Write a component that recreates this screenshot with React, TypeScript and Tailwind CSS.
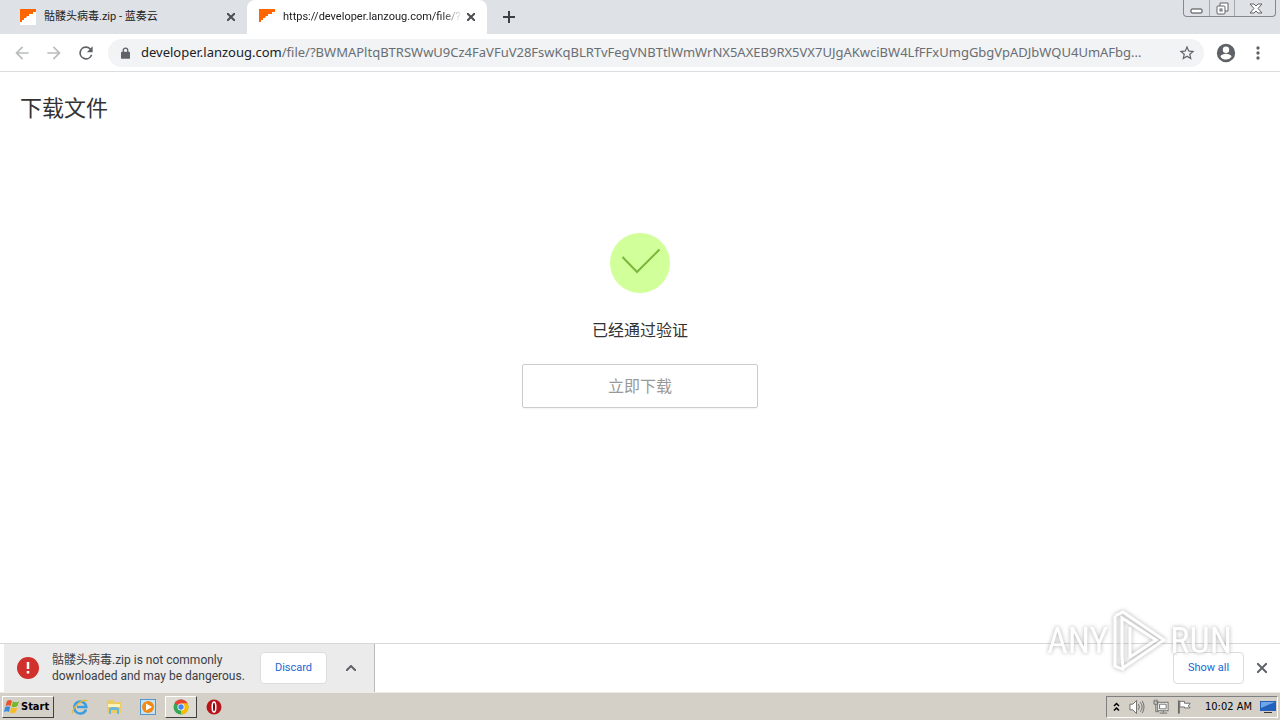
import type { ReactNode } from 'react';

const PATH =
  '/file/?BWMAPltqBTRSWwU9Cz4FaVFuV28FswKqBLRTvFegVNBTtlWmWrNX5AXEB9RX5VX7UJgAKwciBW4LfFFxUmgGbgVpADJbWQU4UmAFbg...';

export default function App() {
  return (
    <div className="flex min-h-screen flex-col bg-white font-['Noto_Sans','Noto_Sans_CJK_SC',sans-serif] text-[#202124]">
      <TabStrip />
      <Toolbar />
      <DownloadPage />
      <DownloadShelf />
      <Taskbar />
    </div>
  );
}

/* ── Tabs ─────────────────────────────────────────── */

function TabStrip() {
  return (
    <header className="flex h-[34px] items-stretch bg-[#dee1e6]">
      <Tab title="骷髅头病毒.zip - 蓝奏云" />
      <Tab title="https://developer.lanzoug.com/file/?" active />
      <button type="button" aria-label="New tab" className="ml-3 flex w-5 items-center justify-center text-[#3c4043]">
        <svg width="12" height="12" viewBox="0 0 12 12" stroke="currentColor" strokeWidth="2">
          <path d="M6 0v12M0 6h12" />
        </svg>
      </button>
      <div className="mr-1 ml-auto flex h-[17px] rounded-b border border-t-0 border-[#85888f] text-[#5f6368]">
        <WindowButton label="Minimize" width="w-[25px]">
          <rect x="3" y="8" width="11" height="4" rx="1" fill="#fff" stroke="#3c4043" />
        </WindowButton>
        <WindowButton label="Restore" width="w-[25px]">
          <path d="M6 5V2h8v8h-3" fill="#fff" />
          <rect x="3" y="5" width="8" height="8" rx="1" fill="#fff" />
          <rect x="6" y="8" width="2" height="2" />
        </WindowButton>
        <WindowButton label="Close" width="w-[41px]">
          <path d="M3 3h4l2 2 2-2h4l-4 4.500 4 4.500h-4l-2-2-2 2H3l4-4.500z" fill="#fff" />
        </WindowButton>
      </div>
    </header>
  );
}

function Tab({ title, active = false }: { title: string; active?: boolean }) {
  return (
    <div
      className={`flex items-center pr-2 ${
        active ? 'w-60 rounded-t-lg bg-white pl-3' : 'w-[247px] pl-5'
      }`}
    >
      <svg width="16" height="16" viewBox="0 0 16 16" className="shrink-0">
        <rect width="16" height="16" fill="#fff" />
        <path d="M0 0h16v3h-3v2h-4v2H7l-1 2H4v2H2v2H0z" fill="#ff6600" />
      </svg>
      <span
        className={`ml-2 min-w-0 flex-1 overflow-hidden pt-px font-[Roboto,'Noto_Sans_CJK_SC',sans-serif] text-[11px] whitespace-nowrap ${
          active ? '[mask-image:linear-gradient(to_right,#000_88%,transparent)]' : ''
        }`}
      >
        {title}
      </span>
      <button type="button" aria-label="Close tab" className="flex size-4 shrink-0 items-center justify-center text-[#4a4d51]">
        <svg width="8" height="8" viewBox="0 0 8 8" stroke="currentColor" strokeWidth="2">
          <path d="M0 0l8 8M8 0L0 8" />
        </svg>
      </button>
    </div>
  );
}

function WindowButton({ label, width, children }: { label: string; width: string; children: ReactNode }) {
  return (
    <button
      type="button"
      aria-label={label}
      className={`flex items-center justify-center border-l border-[#a4a7ad] first:border-l-0 ${width}`}
    >
      <svg width="17" height="15" viewBox="0 0 17 15" fill="none" stroke="currentColor">
        {children}
      </svg>
    </button>
  );
}

/* ── Address bar ──────────────────────────────────── */

function Toolbar() {
  return (
    <nav className="flex h-[38px] items-center border-b border-[#dadce0] px-3">
      <button type="button" aria-label="Back" className="mr-3 text-[#babcbe]">
        <MaterialIcon d="M20 11H7.830l5.590-5.590L12 4l-8 8 8 8 1.410-1.410L7.830 13H20z" />
      </button>
      <button type="button" aria-label="Forward" className="mr-3 text-[#babcbe]">
        <MaterialIcon d="M12 4l-1.410 1.410L16.170 11H4v2h12.170l-5.580 5.590L12 20l8-8z" />
      </button>
      <button type="button" aria-label="Reload" className="mr-3 text-[#5f6368]">
        <MaterialIcon d="M17.650 6.350A8 8 0 1 0 19.730 14h-2.080A6 6 0 1 1 12 6c1.660 0 3.140.690 4.220 1.780L13 11h7V4z" />
      </button>
      <div className="flex h-7 min-w-0 flex-1 items-center rounded-full bg-[#f1f3f4] pr-2 pl-[13px]">
        <svg width="9" height="12" viewBox="0 0 10 13" className="shrink-0 text-[#5f6368]">
          <path d="M2.500 6V3.500a2.500 2.500 0 0 1 5 0V6" fill="none" stroke="currentColor" strokeWidth="1.500" />
          <rect y="5" width="10" height="8" rx="1" fill="currentColor" />
        </svg>
        <a href="#" className="ml-[11px] min-w-0 flex-1 overflow-hidden text-[13px] whitespace-nowrap text-[#6a6e73]">
          <span className="text-[#202124]">developer.lanzoug.com</span>
          {PATH}
        </a>
        <button type="button" aria-label="Bookmark this page" className="ml-2 text-[#5f6368]">
          <MaterialIcon
            size={18}
            d="M22 9.240l-7.190-.620L12 2 9.190 8.630 2 9.240l5.460 4.730L5.820 21 12 17.270 18.180 21l-1.630-7.030zM12 15.400l-3.760 2.270 1-4.280-3.320-2.880 4.380-.380L12 6.100l1.710 4.040 4.380.380-3.320 2.880 1 4.280z"
          />
        </button>
      </div>
      <button type="button" aria-label="Profile" className="ml-[11px] text-[#5f6368]">
        <MaterialIcon
          size={22}
          d="M12 2a10 10 0 1 0 0 20 10 10 0 0 0 0-20zm0 3a3.500 3.500 0 1 1 0 7 3.500 3.500 0 0 1 0-7zm0 14.200a7.200 7.200 0 0 1-6-3.220c.030-1.990 4-3.080 6-3.080s5.970 1.090 6 3.080a7.200 7.200 0 0 1-6 3.220z"
        />
      </button>
      <button type="button" aria-label="Menu" className="ml-[11px] text-[#5f6368]">
        <MaterialIcon d="M12 8a2 2 0 1 0 0-4 2 2 0 0 0 0 4zm0 2a2 2 0 1 0 0 4 2 2 0 0 0 0-4zm0 6a2 2 0 1 0 0 4 2 2 0 0 0 0-4z" />
      </button>
    </nav>
  );
}

function MaterialIcon({ d, size = 20 }: { d: string; size?: number }) {
  return (
    <svg width={size} height={size} viewBox="0 0 24 24" fill="currentColor" className="block">
      <path d={d} />
    </svg>
  );
}

/* ── Page ─────────────────────────────────────────── */

function DownloadPage() {
  return (
    <main className="flex-1 font-['Noto_Sans_CJK_SC',sans-serif] text-[#333]">
      <h1 className="px-5 pt-[18px] text-[22px] leading-8">下载文件</h1>
      <div className="mt-[111px] flex flex-col items-center">
        <svg width="60" height="60" viewBox="0 0 60 60">
          <circle cx="30" cy="30" r="30" fill="#d1ff99" />
          <path d="M12.500 24L27 39l22.500-22.500" fill="none" stroke="#7db63c" strokeWidth="2" />
        </svg>
        <p className="mt-6 text-base leading-6">已经通过验证</p>
        <button
          type="button"
          className="mt-[23px] h-11 w-[236px] rounded-xs border border-[#ccc] pb-[2px] text-base text-[#999] shadow-xs"
        >
          立即下载
        </button>
      </div>
    </main>
  );
}

/* ── Download shelf ───────────────────────────────── */

function DownloadShelf() {
  return (
    <section className="relative flex h-[49px] items-stretch border-t border-[#d5d7da] bg-white pl-1">
      <div className="flex items-center border-r border-[#bbb] bg-[#ebebeb] pr-[11px] pl-3">
        <svg width="24" height="24" viewBox="0 0 24 24" className="shrink-0">
          <circle cx="12" cy="12" r="11" fill="#d0312d" />
          <path d="M12 6v7M12 15v2.500" stroke="#fff" strokeWidth="2.500" />
        </svg>
        <p className="mr-[6px] ml-3 w-[202px] font-[Roboto,'Noto_Sans_CJK_SC',sans-serif] text-xs leading-4 whitespace-nowrap text-[#3c4043]">
          骷髅头病毒.zip is not commonly
          <br />
          downloaded and may be dangerous.
        </p>
        <ShelfButton width="w-[67px]">Discard</ShelfButton>
        <button type="button" aria-label="More options" className="ml-3 flex size-6 items-center justify-center text-[#5f6368]">
          <svg width="10" height="6" viewBox="0 0 10 6" fill="none" stroke="currentColor" strokeWidth="2">
            <path d="M0 6l5-5 5 5" />
          </svg>
        </button>
      </div>
      <div className="ml-auto flex items-center pr-3">
        <ShelfButton width="w-[71px]">Show all</ShelfButton>
        <button type="button" aria-label="Close downloads" className="ml-3 flex size-3 items-center justify-center text-[#5f6368]">
          <svg width="10" height="10" viewBox="0 0 10 10" stroke="currentColor" strokeWidth="2">
            <path d="M0 0l10 10M10 0L0 10" />
          </svg>
        </button>
      </div>
      <Watermark />
    </section>
  );
}

function ShelfButton({ width, children }: { width: string; children: ReactNode }) {
  return (
    <button
      type="button"
      className={`h-8 rounded border border-[#dadce0] bg-white font-[Roboto,sans-serif] text-[11px] leading-3 text-[#1967d2] ${width}`}
    >
      {children}
    </button>
  );
}

// Floats over the page and the shelf, so it must not take clicks.
function Watermark() {
  return (
    <div className="pointer-events-none absolute right-12 bottom-5 flex items-center font-['Roboto_Condensed',Roboto,sans-serif] text-4xl leading-9 text-white opacity-80 drop-shadow-[0_0_2px_#999]">
      <span>ANY</span>
      <svg width="62" height="62" viewBox="0 0 62 62" fill="none" stroke="currentColor" strokeWidth="3">
        <path d="M7 6v50l9 4M7 6l8-4 41 28-41 28-1-12V8l34 22-26 17V17" />
      </svg>
      <span>RUN</span>
    </div>
  );
}

/* ── Taskbar ──────────────────────────────────────── */

function Taskbar() {
  return (
    <footer className="flex h-7 items-center border-t border-[#eceae6] bg-[#d4d0c8] font-['DejaVu_Sans_Condensed','DejaVu_Sans',sans-serif] text-[11px] text-black">
      <button
        type="button"
        className="ml-[2px] flex h-[22px] w-[52px] items-center gap-px border border-t-white border-r-[#404040] border-b-[#404040] border-l-white pt-px pl-px font-bold"
      >
        <svg width="16" height="16" viewBox="0 0 16 16">
          <path d="M3 2q3-2 5 0L6.500 7q-2-1.500-5 0z" fill="#e8532a" />
          <path d="M9 2.500q3 1.500 6 0L13.500 7q-3 2-6 .5z" fill="#76b82a" />
          <path d="M1.200 8q3-1.500 5 0L5 13q-2-1.500-5 0z" fill="#3a8ddc" />
          <path d="M7.200 8.500q3 1.500 6 0L12 13q-3 2-6 .5z" fill="#f7bd1e" />
        </svg>
        Start
      </button>
      <div className="ml-[9px] flex items-center">
        <TaskItem label="Internet Explorer">
          <path d="M14 10.500A6 6 0 1 1 14.300 8H5" fill="none" stroke="#3a9fe0" strokeWidth="2.500" />
          <path d="M1 14.500C-1 10 10-1 15.500 2" fill="none" stroke="#efb92e" strokeWidth="1.200" />
        </TaskItem>
        <TaskItem label="Windows Explorer">
          <path d="M1 3l2-2h4l1 2h7v11H1z" fill="#edcb63" />
          <path d="M2 5h12v3H2z" fill="#fff3b8" />
          <path d="M3 15V9q5-2 10 0v6h-2v-4H5v4z" fill="#69b6df" />
        </TaskItem>
        <TaskItem label="Media Player">
          <rect x=".5" y=".5" width="15" height="15" fill="#c5e3f7" stroke="#5497d0" />
          <circle cx="8" cy="8" r="6" fill="#f28a13" />
          <path d="M6 4.500v7l6-3.500z" fill="#fff" />
        </TaskItem>
        <TaskItem label="Chrome" active>
          <circle cx="8" cy="8" r="7.500" fill="#34a853" />
          <path d="M1.500 4.250A7.500 7.500 0 0 1 14.500 4.250L8 8z" fill="#ea4335" />
          <path d="M14.500 4.250A7.500 7.500 0 0 1 8 15.500V8l1-3.750z" fill="#fbbc05" />
          <circle cx="8" cy="8" r="3.500" fill="#fff" />
          <circle cx="8" cy="8" r="2.700" fill="#4285f4" />
        </TaskItem>
        <TaskItem label="Opera">
          <circle cx="8" cy="8" r="7.500" fill="#b8141c" />
          <ellipse cx="8" cy="8" rx="1.800" ry="5" fill="#80080e" stroke="#fff" strokeWidth="1.500" />
        </TaskItem>
      </div>
      <div className="mr-[2px] ml-auto flex h-[22px] items-center border border-t-[#808080] border-r-white border-b-white border-l-[#808080] pl-[6px]">
        <svg width="7" height="10" viewBox="0 0 7 10" fill="none" stroke="#000" strokeWidth="1.500" className="mr-px">
          <path d="M1 4l2.500-2.500L6 4M1 8.500L3.500 6 6 8.500" />
        </svg>
        <TrayIcon>
          <path d="M1 5h3l4-4v14l-4-4H1z" fill="#fff" />
          <path d="M10 5q2 3 0 6M12 3q4 5 0 10M14 1.500q4 6.500 0 13" />
        </TrayIcon>
        <TrayIcon>
          <rect x="5" y="3" width="11" height="9" fill="#fff" />
          <path d="M7 5h7v5H7zM7 14.500h8M11 12v2M1 1v4h4V1M3 5v8h3M2 0v3M4 0v3" />
        </TrayIcon>
        <TrayIcon>
          <path d="M2 1v14" strokeWidth="2" />
          <path d="M3 2h5v2h6l-2 3 2 2H8V8H3z" fill="#fff" />
        </TrayIcon>
        <time className="ml-3 pt-[2px] whitespace-nowrap">10:02 AM</time>
        <svg width="16" height="14" viewBox="0 0 16 14" className="mr-px ml-2">
          <rect y="1" width="16" height="10" fill="#2361bd" />
          <path d="M1 2h14L1 8z" fill="#6fa6e8" />
          <path d="M4 12.500h8" stroke="#333" />
        </svg>
      </div>
    </footer>
  );
}

function TaskItem({ label, active = false, children }: { label: string; active?: boolean; children: ReactNode }) {
  return (
    <button
      type="button"
      aria-label={label}
      className={`flex h-[22px] items-center justify-center ${
        active
          ? 'w-8 border border-t-white border-r-[#404040] border-b-[#404040] border-l-white bg-[#dedbd5]'
          : 'w-[34px]'
      }`}
    >
      <svg width="16" height="16" viewBox="0 0 16 16">
        {children}
      </svg>
    </button>
  );
}

function TrayIcon({ children }: { children: ReactNode }) {
  return (
    <svg width="16" height="16" viewBox="0 0 17 16" fill="none" stroke="#6b6b6b" className="ml-2">
      {children}
    </svg>
  );
}
